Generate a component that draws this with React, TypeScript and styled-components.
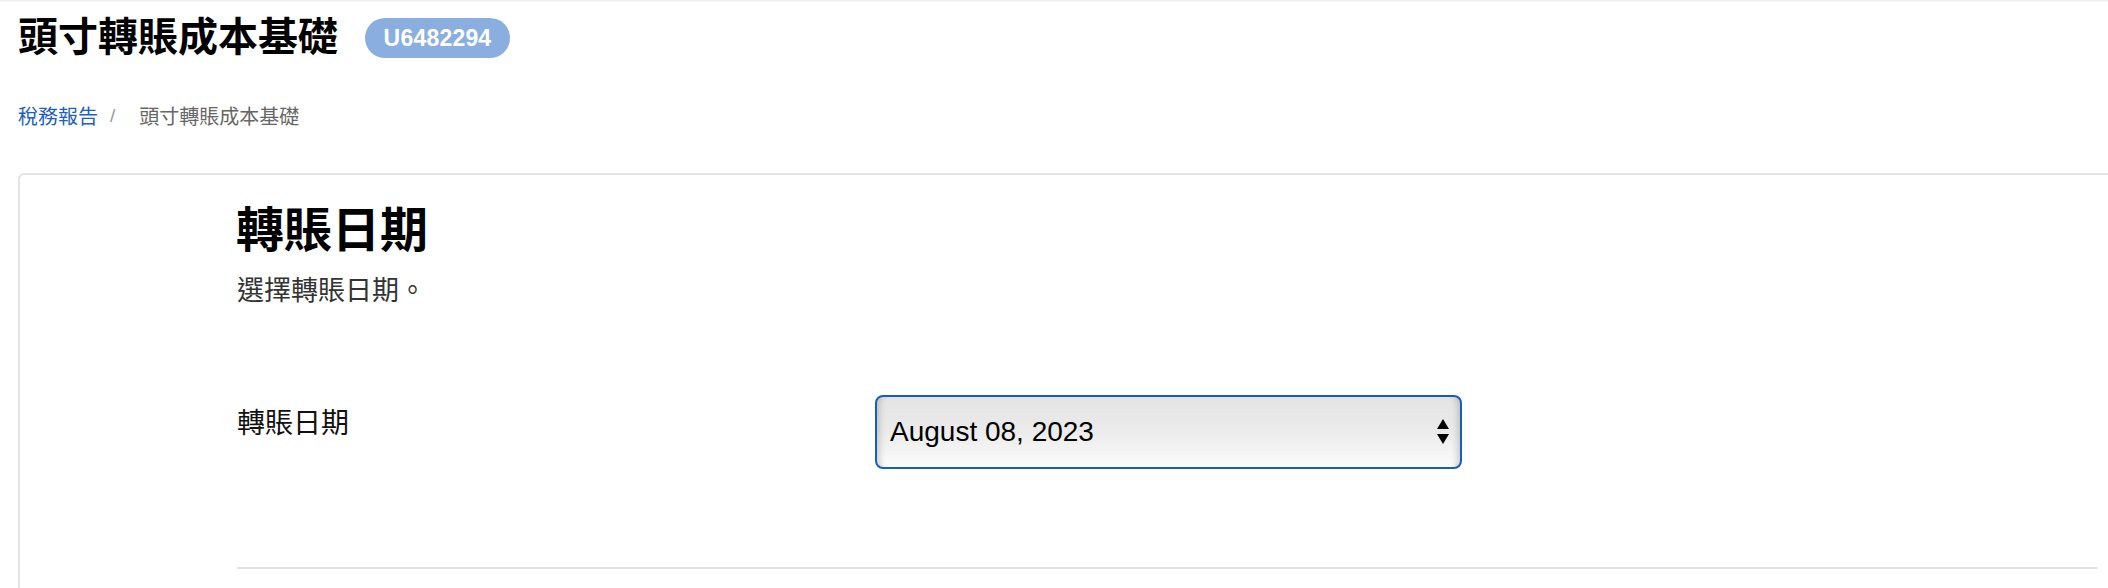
import React from "react";
import styled, { createGlobalStyle } from "styled-components";

const GlobalStyle = createGlobalStyle`
  html, body {
    margin: 0;
    padding: 0;
    background: #ffffff;
    overflow: hidden;
  }
  body {
    font-family: "Noto Sans CJK TC", "Noto Sans", sans-serif;
    color: #000;
  }
`;

const Page = styled.div`
  display: flex;
  flex-direction: column;
  width: 2108px;
  height: 588px;
  overflow: hidden;
`;

const TopShade = styled.div`
  height: 2px;
  flex: none;
  background: linear-gradient(to bottom, #ececec, #fafafa);
`;

const Header = styled.header`
  display: flex;
  align-items: flex-start;
  gap: 27px;
  padding: 12px 0 0 18px;
`;

const Title = styled.h1`
  margin: 0;
  font-family: "Noto Sans CJK TC", sans-serif;
  font-size: 40px;
  line-height: 40px;
  font-weight: 700;
  color: #000;
`;

const Badge = styled.span`
  display: inline-flex;
  align-items: center;
  justify-content: center;
  margin-top: 4px;
  height: 40px;
  width: 145px;
  border-radius: 20px;
  background: #8aaee0;
  color: #ffffff;
  font-family: "Liberation Sans", Arial, sans-serif;
  font-weight: 700;
  font-size: 23px;
  letter-spacing: 0.2px;
`;

const Breadcrumb = styled.nav`
  display: flex;
  align-items: center;
  margin: 48px 0 0 18px;
  font-size: 20px;
  line-height: 20px;
`;

const CrumbLink = styled.a`
  color: #1f5fbf;
  text-decoration: none;
`;

const CrumbSep = styled.span`
  margin: 0 24px 0 12px;
  color: #9a9a9a;
  font-family: "Liberation Sans", Arial, sans-serif;
  font-size: 19px;
`;

const CrumbCurrent = styled.span`
  color: #666666;
`;

const Card = styled.section`
  flex: none;
  margin: 47px -40px 0 18px;
  border: 2px solid #e4e4e4;
  border-radius: 6px 0 0 0;
  padding: 27px 0 40px 217px;
`;

const Content = styled.div`
  display: flex;
  flex-direction: column;
  margin-right: 48px;
`;

const Heading = styled.h2`
  margin: 0 0 0 -1px;
  font-size: 48px;
  line-height: 48px;
  font-weight: 700;
  color: #000;
`;

const Subtitle = styled.p`
  margin: 25px 0 0 0;
  font-size: 27px;
  line-height: 27px;
  color: #333333;
`;

const FormRow = styled.div`
  display: grid;
  grid-template-columns: 638px 587px;
  align-items: start;
  margin-top: 93px;
`;

const Label = styled.label`
  padding-top: 12px;
  font-size: 28px;
  line-height: 28px;
  color: #111111;
`;

const SelectBox = styled.div`
  display: flex;
  align-items: center;
  justify-content: space-between;
  box-sizing: border-box;
  height: 74px;
  padding: 0 11px 0 13px;
  border: 2px solid #165cc1;
  border-radius: 8px;
  background: linear-gradient(to bottom, #e4e4e4 0%, #eaeaea 45%, #fbfbfb 100%);
  box-shadow: inset 9px 0 7px -7px rgba(0, 0, 0, 0.2),
    inset -9px 0 7px -7px rgba(0, 0, 0, 0.2);
  cursor: default;
`;

const SelectValue = styled.span`
  font-family: "Liberation Sans", Arial, sans-serif;
  font-size: 28px;
  color: #000;
`;

const Divider = styled.hr`
  margin: 98px 0 0 0;
  border: 0;
  height: 2px;
  background: #e2e2e2;
`;

const Arrows = () => (
  <svg width="12" height="26" viewBox="0 0 12 26" aria-hidden="true">
    <polygon points="0,10 6,0 12,10" fill="#000" />
    <polygon points="0,15 12,15 6,25" fill="#000" />
  </svg>
);

export default function App() {
  return (
    <>
      <GlobalStyle />
      <Page>
        <TopShade />
        <Header>
          <Title>頭寸轉賬成本基礎</Title>
          <Badge>U6482294</Badge>
        </Header>
        <Breadcrumb>
          <CrumbLink href="#">稅務報告</CrumbLink>
          <CrumbSep>/</CrumbSep>
          <CrumbCurrent>頭寸轉賬成本基礎</CrumbCurrent>
        </Breadcrumb>
        <Card>
          <Content>
            <Heading>轉賬日期</Heading>
            <Subtitle>選擇轉賬日期。</Subtitle>
            <FormRow>
              <Label>轉賬日期</Label>
              <SelectBox role="combobox" aria-expanded="false">
                <SelectValue>August 08, 2023</SelectValue>
                <Arrows />
              </SelectBox>
            </FormRow>
            <Divider />
          </Content>
        </Card>
      </Page>
    </>
  );
}
